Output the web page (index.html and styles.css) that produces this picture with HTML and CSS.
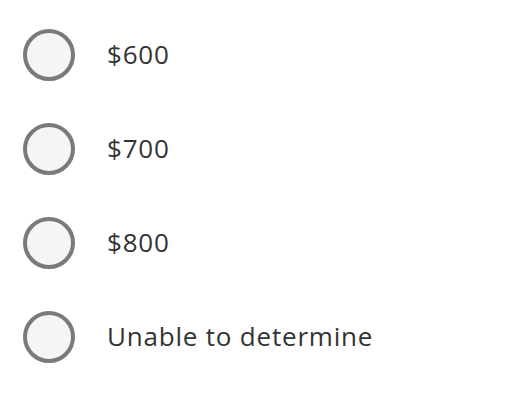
FILE: index.html
```html
<!DOCTYPE html>
<html>
<head>
<meta charset="utf-8">
<link rel="stylesheet" href="styles.css">
</head>
<body>
<ul class="options">
  <li class="option"><span class="radio"></span><span class="label">$600</span></li>
  <li class="option"><span class="radio"></span><span class="label">$700</span></li>
  <li class="option"><span class="radio"></span><span class="label">$800</span></li>
  <li class="option"><span class="radio"></span><span class="label">Unable to determine</span></li>
</ul>
</body>
</html>
```
FILE: styles.css
```css
html, body {
  margin: 0;
  padding: 0;
  background: #ffffff;
}
body {
  font-family: "Open Sans", Lato, sans-serif;
  color: #333333;
}
.options {
  list-style: none;
  margin: 0;
  padding: 29px 0 0 23px;
  display: flex;
  flex-direction: column;
  gap: 42px;
}
.option {
  display: flex;
  align-items: center;
  height: 52px;
}
.radio {
  box-sizing: border-box;
  width: 52px;
  height: 52px;
  border-radius: 50%;
  border: 4px solid #7a7a7a;
  background: #f5f5f5;
  flex: none;
}
.label {
  margin-left: 32px;
  padding-bottom: 3px;
  font-size: 26px;
  letter-spacing: 0.8px;
  line-height: 1;
}
```
